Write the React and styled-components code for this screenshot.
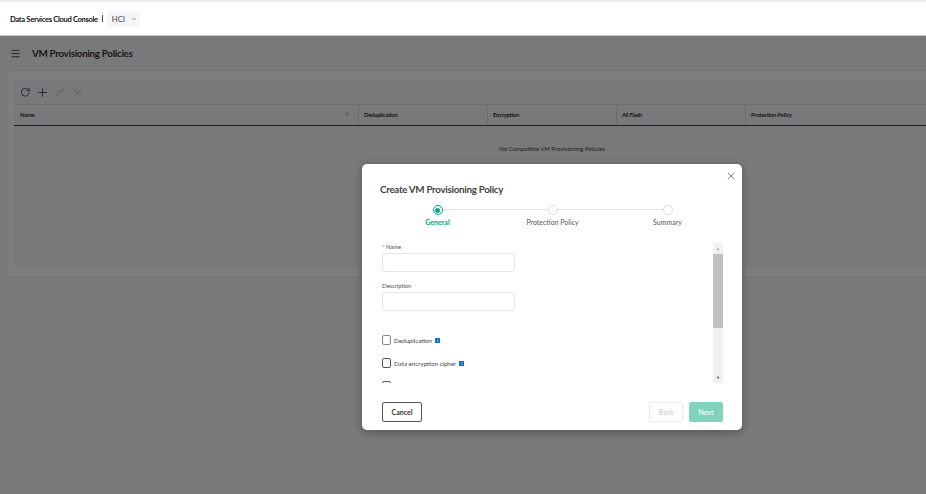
import React from 'react'
import styled, { createGlobalStyle } from 'styled-components'
import { RotateCw, Plus, Pencil, X, Menu, ChevronDown, ArrowUp } from 'lucide-react'

const GlobalStyle = createGlobalStyle`
  html, body { margin: 0; padding: 0; height: 100%; }
  body { font-family: Lato, Roboto, "Liberation Sans", sans-serif; color: #222; overflow: hidden; }
  * { box-sizing: border-box; }
`

const Page = styled.div`
  position: relative;
  width: 926px;
  height: 494px;
  display: flex;
  flex-direction: column;
  background: #f3f4f7;
  overflow: hidden;
`

const TopBar = styled.header`
  height: 36px;
  flex: none;
  display: flex;
  align-items: center;
  padding-left: 10px;
  background: #fff;
  border-top: 2px solid #f0f0f0;
  border-bottom: 1px solid #c9c9c9;
`

const Brand = styled.span`
  font-size: 7.6px;
  font-weight: 700;
  color: #111;
  letter-spacing: -0.33px;
`

const Divider = styled.span`
  width: 1px;
  height: 7px;
  margin: 0 4px;
  background: #555;
`

const Tenant = styled.div`
  display: flex;
  align-items: center;
  gap: 6px;
  width: 33px;
  height: 16px;
  padding-left: 5px;
  border-radius: 3px;
  background: #f5f6fa;
  font-size: 7.6px;
  color: #444;
`

const Main = styled.main`
  flex: 1;
  padding-left: 6px;
`

const TitleRow = styled.div`
  display: flex;
  align-items: center;
  gap: 11px;
  height: 34px;
  padding-left: 4px;
`

const PageTitle = styled.h1`
  margin: 0;
  font-size: 9.8px;
  font-weight: 700;
  color: #333;
  letter-spacing: -0.3px;
`

const Card = styled.section`
  height: 207px;
  padding: 9px 0 9px 7px;
  background: #fff;
  border: 1px solid #ececec;
  border-right: 0;
  border-radius: 3px 0 0 3px;
`

const TablePanel = styled.div`
  height: 100%;
  background: #f4f5f8;
`

const Toolbar = styled.div`
  display: flex;
  align-items: center;
  height: 25px;
  padding-left: 2px;
  border-bottom: 1px solid #e3e3e3;
`

const ToolIcon = styled.span`
  display: flex;
  align-items: center;
  justify-content: center;
  width: 17.5px;
  color: ${(p) => (p.$off ? '#b8b8b8' : '#1c2a3a')};
`

const HeadRow = styled.div`
  display: grid;
  grid-template-columns: 344px 129px 129px 129px 1fr;
  height: 21px;
  border-bottom: 1px solid #444;
`

const HeadCell = styled.div`
  display: flex;
  align-items: center;
  justify-content: space-between;
  padding: 0 7px 1px ${(p) => (p.$first ? '6px' : '5px')};
  font-size: 5.8px;
  font-weight: 700;
  letter-spacing: -0.2px;
  color: #2b2b2b;
  border-left: ${(p) => (p.$first ? '0' : '1px solid #dcdcdc')};
`

const EmptyNote = styled.p`
  margin: 19px 0 0;
  padding-left: 164px;
  text-align: center;
  font-size: 6px;
  line-height: 7px;
  color: #444;
`

const Backdrop = styled.div`
  position: absolute;
  left: 0;
  right: 0;
  top: 36px;
  bottom: 0;
  background: rgba(0, 0, 0, 0.505);
`

const Modal = styled.div`
  position: absolute;
  left: 362px;
  top: 164px;
  width: 380px;
  height: 266px;
  display: flex;
  flex-direction: column;
  padding: 19px 19px 8px 18px;
  background: #fff;
  border-radius: 5px;
  box-shadow: 0 2px 10px rgba(0, 0, 0, 0.3);
`

const CloseButton = styled.span`
  position: absolute;
  top: 6px;
  right: 5px;
  display: flex;
  color: #444;
`

const ModalTitle = styled.h2`
  margin: 0;
  font-size: 9.8px;
  line-height: 12px;
  font-weight: 700;
  color: #444;
  letter-spacing: -0.3px;
`

const Stepper = styled.div`
  display: grid;
  grid-template-columns: repeat(3, 115px);
  margin-top: 10px;
`

const Step = styled.div`
  position: relative;
  display: flex;
  flex-direction: column;
  align-items: center;
  gap: 3px;

  &::before {
    content: '';
    position: absolute;
    top: 4px;
    left: ${(p) => (p.$last ? '0' : '50%')};
    right: ${(p) => (p.$first ? '0' : '50%')};
    height: 1px;
    background: #e2e5ec;
  }
`

const StepDot = styled.span`
  position: relative;
  width: 10px;
  height: 10px;
  display: flex;
  align-items: center;
  justify-content: center;
  border-radius: 50%;
  background: #fff;
  border: 1px solid ${(p) => (p.$active ? '#01a982' : '#dcdfe5')};

  &::after {
    content: '';
    display: ${(p) => (p.$active ? 'block' : 'none')};
    width: 5px;
    height: 5px;
    border-radius: 50%;
    background: #01a982;
  }
`

const StepLabel = styled.span`
  font-size: 7px;
  line-height: 9px;
  font-weight: ${(p) => (p.$active ? 700 : 400)};
  color: ${(p) => (p.$active ? '#01a982' : '#555')};
`

const FormArea = styled.div`
  display: flex;
  height: 140px;
  margin-top: 16px;
  overflow: hidden;
`

const FormFields = styled.div`
  flex: 1;
  padding: 1px 0 0 2px;
`

const Field = styled.div`
  margin-bottom: 11px;
`

const FieldLabel = styled.label`
  display: block;
  height: 5px;
  margin-bottom: 4px;
  font-size: 6px;
  line-height: 5px;
  letter-spacing: -0.1px;
  color: #555;
`

const Required = styled.span`
  color: #d04f4e;
`

const TextInput = styled.input`
  display: block;
  width: 133px;
  height: 19px;
  margin: 0;
  padding: 0 4px;
  border: 1px solid #e6e6e6;
  border-radius: 3px;
  background: #fff;
  outline: none;
`

const CheckRow = styled.div`
  display: flex;
  align-items: center;
  height: 10px;
  margin-bottom: ${(p) => (p.$clip ? '0' : '13px')};
  margin-top: ${(p) => (p.$top ? '24px' : '0')};
`

const Box = styled.span`
  flex: none;
  width: 9px;
  height: 10px;
  border: 1px solid ${(p) => (p.$dark ? '#555' : '#888')};
  border-radius: 2px;
  background: #fff;
  margin-right: 3px;
`

const CheckLabel = styled.span`
  font-size: 6.2px;
  color: #444;
`

const InfoBadge = styled.span`
  width: 5px;
  height: 5px;
  margin-left: 3px;
  display: flex;
  align-items: center;
  justify-content: center;
  background: #1b6fd0;
  color: #dce9fa;
  font-size: 4px;
  line-height: 5px;
`

const ScrollTrack = styled.div`
  flex: none;
  width: 10px;
  height: 140px;
  display: flex;
  flex-direction: column;
  align-items: center;
  background: #f1f1f1;
`

const ScrollArrow = styled.span`
  flex: none;
  height: 11px;
  display: flex;
  align-items: center;
  justify-content: center;
  font-size: 4px;
  color: ${(p) => (p.$dark ? '#333' : '#a3a3a3')};
`

const ScrollThumb = styled.div`
  width: 100%;
  height: 74px;
  background: #c1c1c1;
`

const ScrollRest = styled.div`
  flex: 1;
`

const Footer = styled.div`
  display: flex;
  align-items: center;
  gap: 6px;
  margin-top: 19px;
  padding-left: 2px;
`

const Button = styled.button`
  width: ${(p) => p.$w}px;
  height: 20px;
  margin-right: ${(p) => (p.$push ? 'auto' : '0')};
  padding: 0;
  border-radius: 2px;
  font-family: inherit;
  font-size: 7px;
  font-weight: 700;
  border: 1px solid ${(p) => p.$line};
  background: ${(p) => p.$bg};
  color: ${(p) => p.$fg};
`

const InfoDot = () => <InfoBadge>i</InfoBadge>

export default function App() {
  return (
    <Page>
      <GlobalStyle />
      <TopBar>
        <Brand>Data Services Cloud Console</Brand>
        <Divider />
        <Tenant>
          HCI
          <ChevronDown size={6} strokeWidth={2} />
        </Tenant>
      </TopBar>

      <Main>
        <TitleRow>
          <Menu size={11} strokeWidth={1.8} color="#333" />
          <PageTitle>VM Provisioning Policies</PageTitle>
        </TitleRow>
        <Card>
          <TablePanel>
            <Toolbar>
              <ToolIcon><RotateCw size={10.5} strokeWidth={1.7} /></ToolIcon>
              <ToolIcon><Plus size={13} strokeWidth={1.4} /></ToolIcon>
              <ToolIcon $off><Pencil size={9} strokeWidth={2} /></ToolIcon>
              <ToolIcon $off><X size={15} strokeWidth={1.2} /></ToolIcon>
            </Toolbar>
            <HeadRow>
              <HeadCell $first>
                Name
                <ArrowUp size={7} strokeWidth={1.5} color="#777" />
              </HeadCell>
              <HeadCell>Deduplication</HeadCell>
              <HeadCell>Encryption</HeadCell>
              <HeadCell>All Flash</HeadCell>
              <HeadCell>Protection Policy</HeadCell>
            </HeadRow>
            <EmptyNote>No Compatible VM Provisioning Policies</EmptyNote>
          </TablePanel>
        </Card>
      </Main>

      <Backdrop />

      <Modal>
        <CloseButton><X size={12} strokeWidth={1.3} /></CloseButton>
        <ModalTitle>Create VM Provisioning Policy</ModalTitle>
        <Stepper>
          <Step $first>
            <StepDot $active />
            <StepLabel $active>General</StepLabel>
          </Step>
          <Step $first $last>
            <StepDot />
            <StepLabel>Protection Policy</StepLabel>
          </Step>
          <Step $last>
            <StepDot />
            <StepLabel>Summary</StepLabel>
          </Step>
        </Stepper>

        <FormArea>
          <FormFields>
            <Field>
              <FieldLabel><Required>* </Required>Name</FieldLabel>
              <TextInput />
            </Field>
            <Field>
              <FieldLabel>Description</FieldLabel>
              <TextInput />
            </Field>
            <CheckRow $top>
              <Box />
              <CheckLabel>Deduplication</CheckLabel>
              <InfoDot />
            </CheckRow>
            <CheckRow>
              <Box $dark />
              <CheckLabel>Data encryption cipher</CheckLabel>
              <InfoDot />
            </CheckRow>
            <CheckRow $clip>
              <Box $dark />
            </CheckRow>
          </FormFields>
          <ScrollTrack>
            <ScrollArrow>▲</ScrollArrow>
            <ScrollThumb />
            <ScrollRest />
            <ScrollArrow $dark>▼</ScrollArrow>
          </ScrollTrack>
        </FormArea>

        <Footer>
          <Button $w={40} $push $line="#555" $bg="#fff" $fg="#333">Cancel</Button>
          <Button $w={34} $line="#ececec" $bg="#fff" $fg="#d4d4d4">Back</Button>
          <Button $w={34} $line="#80d4be" $bg="#80d4be" $fg="#e9f8f4">Next</Button>
        </Footer>
      </Modal>
    </Page>
  )
}
